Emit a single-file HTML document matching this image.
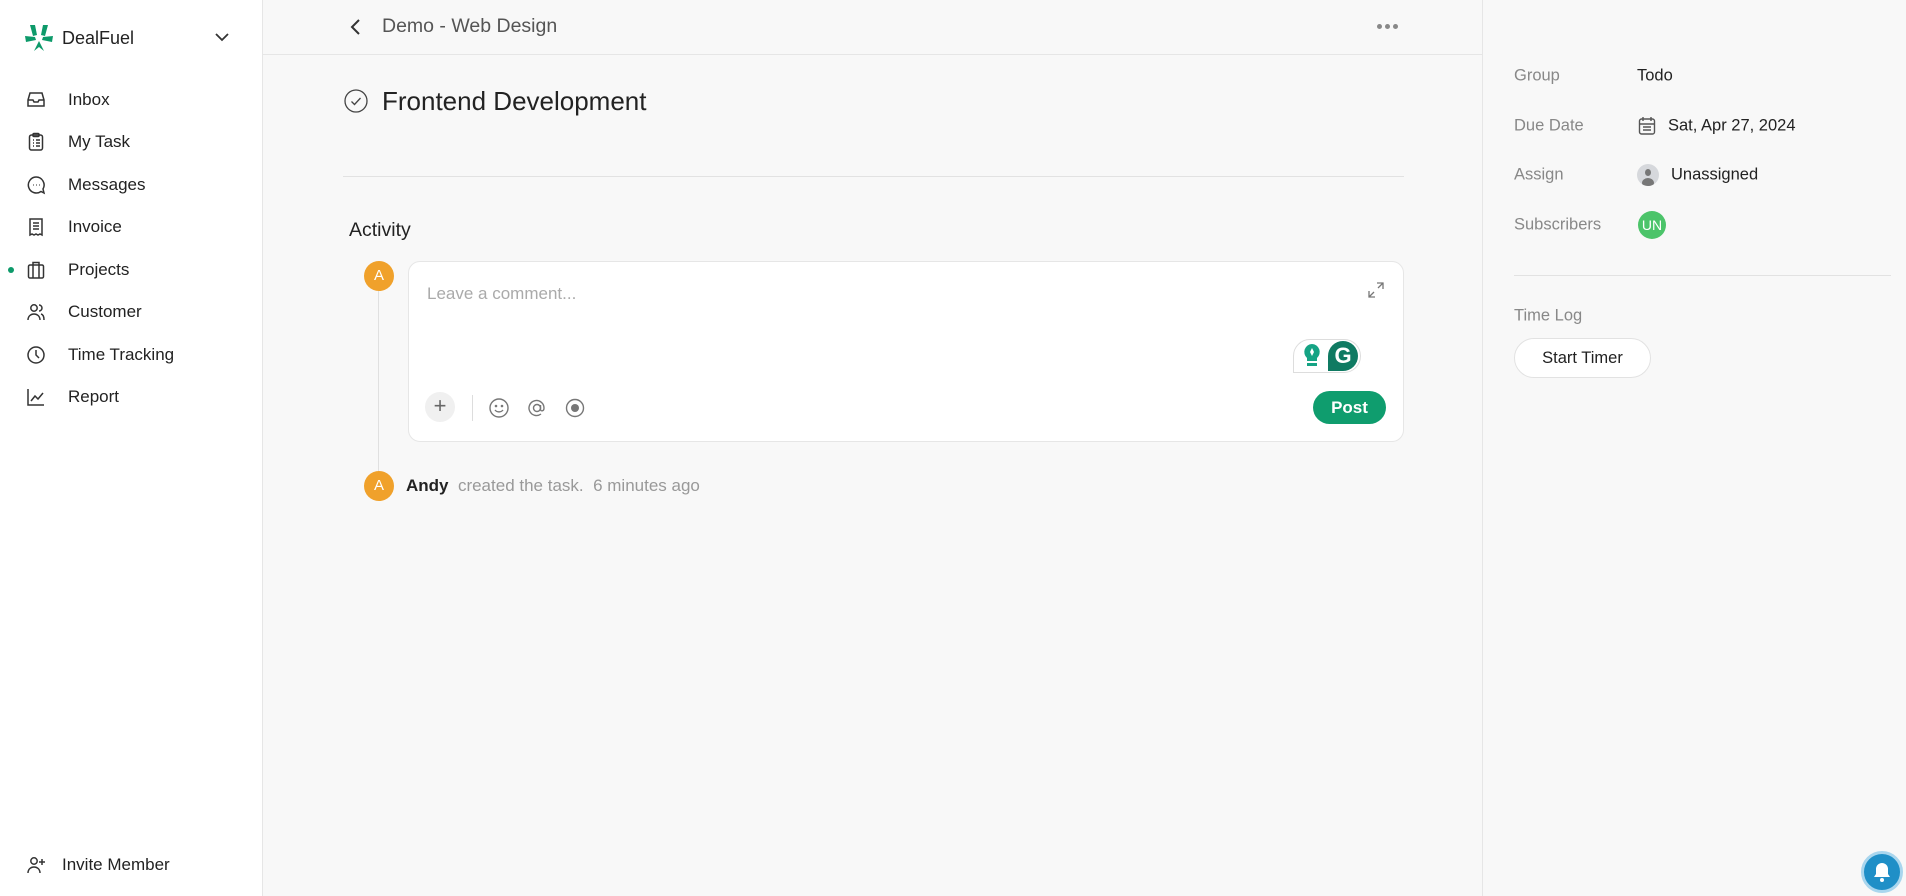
<!DOCTYPE html>
<html><head><meta charset="utf-8"><style>
*{box-sizing:border-box;margin:0;padding:0}
body{width:1906px;height:896px;overflow:hidden;font-family:"Liberation Sans",sans-serif;background:#f8f8f8;position:relative;color:#222}
.abs{position:absolute}
#side{left:0;top:0;width:263px;height:896px;background:#fff;border-right:1px solid #e6e6e6}
.nav{position:absolute;left:68px;font-size:17px;color:#222;transform:translateY(-50%)}
.ic{position:absolute;transform:translate(-50%,-50%)}
#right{left:1482px;top:0;width:424px;height:896px;border-left:1px solid #e6e6e6;background:#f8f8f8}
.lbl{position:absolute;left:31px;font-size:16.5px;color:#888;transform:translateY(-50%)}
.val{position:absolute;font-size:16.5px;color:#222;transform:translateY(-50%)}
</style></head><body>
<div id="side" class="abs">
<svg class="abs" style="left:24px;top:24px" width="30" height="30" viewBox="0 0 30 30"><g fill="#0d9a6a"><path d="M6 1 L11 1 L13 11 L9 12 Z"/><path d="M24 1 L19 1 L17 11 L21 12 Z"/><path d="M1 12 L11 13 L12 16 L2 18 Z"/><path d="M29 12 L19 13 L18 16 L28 18 Z"/><path d="M15 17 L20 27 L15 23 L10 27 Z"/></g></svg>
<div class="abs" style="left:62px;top:28px;font-size:18px">DealFuel</div>
<svg class="abs" style="left:214px;top:32px" width="16" height="10" viewBox="0 0 16 10"><path d="M2 2 L8 8 L14 2" fill="none" stroke="#333" stroke-width="1.8"/></svg>
<svg class="ic" style="left:36px;top:100px" width="20" height="20" viewBox="0 0 20 20" fill="none" stroke="#333" stroke-width="1.5"><path d="M2 10 L4 3 H16 L18 10 V16 H2 Z M2 10 H7 L8 12 H12 L13 10 H18"/></svg>
<div class="nav" style="top:100px">Inbox</div>
<svg class="ic" style="left:36px;top:142px" width="20" height="20" viewBox="0 0 20 20" fill="none" stroke="#333" stroke-width="1.5"><rect x="3.5" y="3" width="13" height="15" rx="2"/><rect x="7" y="1.5" width="6" height="3" rx="1"/><path d="M7 8h1M10 8h4M7 11h1M10 11h4M7 14h1M10 14h4"/></svg>
<div class="nav" style="top:142px">My Task</div>
<svg class="ic" style="left:36px;top:185px" width="20" height="20" viewBox="0 0 20 20" fill="none" stroke="#333" stroke-width="1.5"><path d="M10 2a8 8 0 1 0 5 14.5 L18 18 L17 14 A8 8 0 0 0 10 2Z"/><path d="M7 10h.5M10 10h.5M13 10h.5" stroke-width="2"/></svg>
<div class="nav" style="top:185px">Messages</div>
<svg class="ic" style="left:36px;top:227px" width="20" height="20" viewBox="0 0 20 20" fill="none" stroke="#333" stroke-width="1.5"><path d="M4 2h12v16l-2-1-2 1-2-1-2 1-2-1-2 1Z"/><path d="M7 6h6M7 9h6M7 12h6"/></svg>
<div class="nav" style="top:227px">Invoice</div>
<div class="abs" style="left:8px;top:267px;width:6px;height:6px;border-radius:50%;background:#0d9a6a"></div>
<svg class="ic" style="left:36px;top:270px" width="20" height="20" viewBox="0 0 20 20" fill="none" stroke="#333" stroke-width="1.5"><rect x="2.5" y="5" width="15" height="13" rx="1.5"/><path d="M7 5V2.5h6V5M7 5v13M13 5v13"/></svg>
<div class="nav" style="top:270px">Projects</div>
<svg class="ic" style="left:36px;top:312px" width="20" height="20" viewBox="0 0 20 20" fill="none" stroke="#333" stroke-width="1.5"><circle cx="8" cy="6" r="3.2"/><path d="M2 18c0-4 3-6 6-6s6 2 6 6M13 3a3 3 0 0 1 0 6M15 12c2 .5 3 3 3 6"/></svg>
<div class="nav" style="top:312px">Customer</div>
<svg class="ic" style="left:36px;top:355px" width="20" height="20" viewBox="0 0 20 20" fill="none" stroke="#333" stroke-width="1.5"><circle cx="10" cy="10" r="8"/><path d="M10 5v5l3 3"/></svg>
<div class="nav" style="top:355px">Time Tracking</div>
<svg class="ic" style="left:36px;top:397px" width="20" height="20" viewBox="0 0 20 20" fill="none" stroke="#333" stroke-width="1.5"><path d="M2 2v16h16M5 14l4-5 3 3 5-6"/></svg>
<div class="nav" style="top:397px">Report</div>
<svg class="ic" style="left:36px;top:865px" width="20" height="20" viewBox="0 0 20 20" fill="none" stroke="#333" stroke-width="1.5"><circle cx="8" cy="6" r="3.2"/><path d="M2 18c0-4 3-6 6-6s6 2 6 6M16 4v6M13 7h6"/></svg>
<div class="nav" style="left:62px;top:865px">Invite Member</div>
</div>

<div class="abs" style="left:263px;top:54px;width:1219px;height:1px;background:#e6e6e6"></div>
<svg class="abs" style="left:349px;top:18px" width="14" height="18" viewBox="0 0 14 18"><path d="M10 2 L3 9 L10 16" fill="none" stroke="#333" stroke-width="2"/></svg>
<div class="abs" style="left:382px;top:15px;font-size:19.5px;color:#555">Demo - Web Design</div>
<div class="abs" style="left:1377px;top:24px;width:24px;height:6px"><span style="position:absolute;left:0;width:5px;height:5px;border-radius:50%;background:#888"></span><span style="position:absolute;left:8px;width:5px;height:5px;border-radius:50%;background:#888"></span><span style="position:absolute;left:16px;width:5px;height:5px;border-radius:50%;background:#888"></span></div>
<svg class="abs" style="left:344px;top:89px" width="24" height="24" viewBox="0 0 24 24" fill="none" stroke="#444" stroke-width="1.3"><circle cx="12" cy="12" r="11"/><path d="M7.5 12.5l3 3 6-6.5"/></svg>
<div class="abs" style="left:382px;top:86px;font-size:26px;color:#222">Frontend Development</div>
<div class="abs" style="left:343px;top:176px;width:1061px;height:1px;background:#e2e2e2"></div>
<div class="abs" style="left:349px;top:219px;font-size:19.5px;color:#222">Activity</div>
<div class="abs" style="left:378px;top:290px;width:1px;height:190px;background:#e0e0e0"></div>
<div class="abs" style="left:364px;top:261px;width:30px;height:30px;border-radius:50%;background:#f0a12b;color:#fff;font-size:15px;text-align:center;line-height:30px">A</div>
<div class="abs" style="left:408px;top:261px;width:996px;height:181px;background:#fff;border:1px solid #e6e6e6;border-radius:12px"></div>
<div class="abs" style="left:427px;top:284px;font-size:17px;color:#aaa">Leave a comment...</div>
<svg class="abs" style="left:1367px;top:281px" width="18" height="18" viewBox="0 0 18 18" fill="none" stroke="#777" stroke-width="1.3"><path d="M10 2h6v6M16 2l-5 5M8 16H2v-6M2 16l5-5"/></svg>
<div class="abs" style="left:1293px;top:339px;width:68px;height:34px;border:1px solid #ddd;border-radius:17px 17px 17px 0;background:#fff"></div>
<svg class="abs" style="left:1300px;top:343px" width="24" height="26" viewBox="0 0 24 26"><path d="M12 1a8 8 0 0 0-5 14v3h10v-3a8 8 0 0 0-5-14Z" fill="#15a384"/><rect x="7" y="20" width="10" height="3" fill="#15a384"/><path d="M12 5l2 4-2 4-2-4Z" fill="#fff"/></svg>
<div class="abs" style="left:1328px;top:341px;width:30px;height:30px;border-radius:50% 50% 50% 0;background:#0f7a62;color:#fff;font-weight:bold;font-size:22px;text-align:center;line-height:30px">G</div>
<div class="abs" style="left:425px;top:392px;width:30px;height:30px;border-radius:50%;background:#f0f0f0;color:#666;font-size:22px;text-align:center;line-height:28px">+</div>
<div class="abs" style="left:472px;top:395px;width:1px;height:26px;background:#ddd"></div>
<svg class="abs" style="left:488px;top:397px" width="22" height="22" viewBox="0 0 22 22" fill="none" stroke="#777" stroke-width="1.4"><circle cx="11" cy="11" r="9"/><path d="M7 13c2 2.5 6 2.5 8 0"/><circle cx="8" cy="9" r=".6"/><circle cx="14" cy="9" r=".6"/></svg>
<svg class="abs" style="left:526px;top:397px" width="22" height="22" viewBox="0 0 22 22" fill="none" stroke="#777" stroke-width="1.4"><circle cx="11" cy="11" r="3.5"/><path d="M14.5 8v4.5c0 2 3.5 2 3.5-1.5a7.5 7.5 0 1 0-3 6"/></svg>
<svg class="abs" style="left:564px;top:397px" width="22" height="22" viewBox="0 0 22 22"><circle cx="11" cy="11" r="8.5" fill="none" stroke="#777" stroke-width="1.4"/><circle cx="11" cy="11" r="4" fill="#777"/></svg>
<div class="abs" style="left:1313px;top:391px;width:73px;height:33px;border-radius:17px;background:#0f9d6e;color:#fff;font-size:17px;font-weight:600;text-align:center;line-height:33px">Post</div>
<div class="abs" style="left:364px;top:471px;width:30px;height:30px;border-radius:50%;background:#f0a12b;color:#fff;font-size:15px;text-align:center;line-height:30px">A</div>
<div class="abs" style="left:406px;top:476px;font-size:17px;color:#999"><b style="color:#222">Andy</b> &nbsp;created the task. &nbsp;6 minutes ago</div>

<div id="right" class="abs">
<div class="lbl" style="top:76px">Group</div>
<div class="val" style="left:154px;top:76px">Todo</div>
<div class="lbl" style="top:126px">Due Date</div>
<svg class="abs" style="left:155px;top:116px" width="18" height="20" viewBox="0 0 18 20" fill="none" stroke="#555" stroke-width="1.4"><rect x="1.5" y="3" width="15" height="15" rx="2"/><path d="M5 1v4M13 1v4M1.5 8h15M5 11h8M5 14h8"/></svg>
<div class="val" style="left:185px;top:126px">Sat, Apr 27, 2024</div>
<div class="lbl" style="top:175px">Assign</div>
<div class="abs" style="left:154px;top:164px;width:22px;height:22px;border-radius:50%;background:#d6d8dc;overflow:hidden"><div style="position:absolute;left:8px;top:5px;width:6px;height:7px;border-radius:50%;background:#777"></div><div style="position:absolute;left:5px;top:14px;width:12px;height:10px;border-radius:50%;background:#777"></div></div>
<div class="val" style="left:188px;top:175px">Unassigned</div>
<div class="lbl" style="top:225px">Subscribers</div>
<div class="abs" style="left:155px;top:211px;width:28px;height:28px;border-radius:50%;background:#4cc46a;color:#fff;font-size:14px;text-align:center;line-height:28px">UN</div>
<div class="abs" style="left:31px;top:275px;width:377px;height:1px;background:#e2e2e2"></div>
<div class="lbl" style="top:316px">Time Log</div>
<div class="abs" style="left:31px;top:338px;width:137px;height:40px;border-radius:20px;background:#fff;border:1px solid #e2e2e2;font-size:16.5px;text-align:center;line-height:38px">Start Timer</div>
</div>
<div class="abs" style="left:1861px;top:851px;width:42px;height:42px;border-radius:50%;background:#1f8fc7;border:3px solid #a9d6ee"></div>
<svg class="abs" style="left:1872px;top:861px" width="20" height="22" viewBox="0 0 20 22"><path d="M10 2a6 6 0 0 0-6 6v5l-2 3h16l-2-3V8a6 6 0 0 0-6-6Z" fill="#fff"/><circle cx="10" cy="19" r="2" fill="#fff"/></svg>
</body></html>
